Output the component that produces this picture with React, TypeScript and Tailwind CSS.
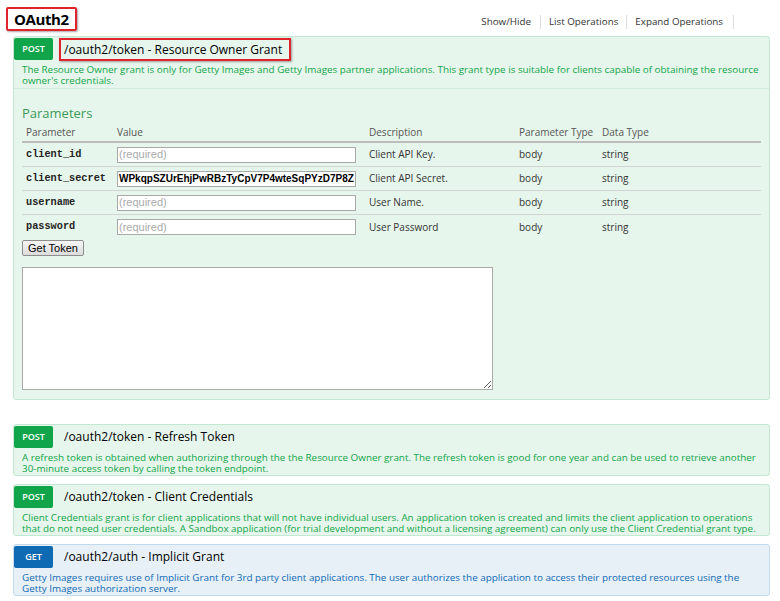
import React from "react";

interface Param {
  name: string;
  value: string;
  description: string;
}

const params: Param[] = [
  { name: "client_id", value: "", description: "Client API Key." },
  {
    name: "client_secret",
    value: "WPkqpSZUrEhjPwRBzTyCpV7P4wteSqPYzD7P8ZNxHuVe",
    description: "Client API Secret.",
  },
  { name: "username", value: "", description: "User Name." },
  { name: "password", value: "", description: "User Password" },
];

const sans = "font-['Open_Sans',sans-serif]";

const Badge = ({ method, blue }: { method: string; blue?: boolean }) => (
  <div
    className={`flex h-[22px] w-[39px] items-center justify-center rounded-[2px] text-[9px] font-semibold text-white ${
      blue ? "bg-[#0f6ab4]" : "bg-[#10a54a]"
    }`}
  >
    {method}
  </div>
);

const OperationPanel = ({
  method,
  title,
  lines,
  blue,
}: {
  method: string;
  title: string;
  lines: string[];
  blue?: boolean;
}) => (
  <div
    className={`rounded-[3px] border ${
      blue
        ? "border-[#c3d9ec] bg-[#e7f0f7]"
        : "border-[#c3e8d1] bg-[#e7f6ec]"
    }`}
  >
    <div className="flex h-[23px] items-center">
      <Badge method={method} blue={blue} />
      <span className="ml-[11px] text-[12px] text-black">{title}</span>
    </div>
    <div
      className={`px-[8px] pb-[1px] pt-[4px] text-[9.85px] leading-[11px] ${
        blue ? "text-[#0f6ab4]" : "text-[#10a54a]"
      }`}
    >
      {lines.map((l) => (
        <div key={l} className="whitespace-nowrap">
          {l}
        </div>
      ))}
    </div>
  </div>
);

export default function App() {
  return (
    <div className={`min-h-[601px] w-[780px] bg-white pl-[13px] pr-[10px] ${sans}`}>
      {/* header */}
      <div className="flex h-[36px] items-start justify-between">
        <div className="ml-[-7px] mt-[7px] flex h-[24px] items-center rounded-[2px] border-2 border-[#e0242b] px-[6px] shadow-[1px_1px_2px_rgba(0,0,0,0.35)]">
          <span className="text-[15px] font-bold tracking-[-0.4px] text-black">OAuth2</span>
        </div>
        <div className="mr-[36px] mt-[15px] flex items-center text-[9.8px] text-[#333]">
          <span className="pr-[9px]">Show/Hide</span>
          <span className="h-[14px] w-px bg-[#ddd]" />
          <span className="px-[8px]">List Operations</span>
          <span className="h-[14px] w-px bg-[#ddd]" />
          <span className="pl-[8px] pr-[10px]">Expand Operations</span>
          <span className="h-[14px] w-px bg-[#ddd]" />
        </div>
      </div>

      {/* main expanded operation */}
      <div className="w-[757px] rounded-[3px] border border-[#c3e8d1] bg-[#e7f6ec]">
        <div className="flex h-[23px] items-center">
          <Badge method="POST" />
          <div className="ml-[6px] mt-[2px] flex h-[23px] items-center border-2 border-[#e0242b] pl-[3px] pr-[7px] shadow-[1px_1px_2px_rgba(0,0,0,0.35)]">
            <span className="text-[12px] text-black">
              /oauth2/token - Resource Owner Grant
            </span>
          </div>
        </div>
        <div className="border-b border-[#d2ecdb] px-[8px] pb-[2px] pt-[4px] text-[9.85px] leading-[11px] text-[#10a54a]">
          <div className="whitespace-nowrap">
            The Resource Owner grant is only for Getty Images and Getty Images
            partner applications. This grant type is suitable for clients
            capable of obtaining the resource
          </div>
          <div className="whitespace-nowrap">owner's credentials.</div>
        </div>

        <div className="px-[8px] pb-[9px] pt-[15px]">
          <div className="text-[13px] leading-[18px] text-[#3b9a5a]">Parameters</div>
          <div className="mt-[2px] w-[739px]">
            <div className="grid h-[19px] grid-cols-[91px_252px_150px_83px_163px] items-center border-b-2 border-[#bdbdbd] text-[10px] text-[#555]">
              <div className="pl-[4px]">Parameter</div>
              <div className="pl-[4px]">Value</div>
              <div className="pl-[4px]">Description</div>
              <div className="pl-[4px]">Parameter Type</div>
              <div className="pl-[4px]">Data Type</div>
            </div>
            {params.map((p, i) => (
              <div
                key={p.name}
                className={`grid h-[24px] grid-cols-[91px_252px_150px_83px_163px] items-center text-[10px] text-[#333] ${
                  i < params.length - 1 ? "border-b border-[#d4d4d4]" : ""
                }`}
              >
                <div className="pl-[4px] font-['Courier_New','Liberation_Mono',monospace] text-[10.25px] font-bold text-[#222]">
                  {p.name}
                </div>
                <div className="pl-[4px]">
                  <input
                    readOnly
                    value={p.value}
                    placeholder="(required)"
                    className={`block h-[16px] w-[239px] border border-[#a9a9a9] bg-white px-[1px] font-['Liberation_Sans',Arial,sans-serif] text-black placeholder:text-[#aaa] ${
                      p.value ? "text-[10px] font-bold" : "text-[11px]"
                    }`}
                  />
                </div>
                <div className="pl-[4px]">{p.description}</div>
                <div className="pl-[4px]">body</div>
                <div className="pl-[4px]">string</div>
              </div>
            ))}
          </div>
          <button className="mt-[1px] block h-[16px] rounded-[2px] border border-[#8e8e8e] bg-gradient-to-b from-[#f6f6f6] to-[#dcdcdc] px-[5px] font-['Liberation_Sans',Arial,sans-serif] text-[11px] leading-[14px] text-black">
            Get Token
          </button>
          <textarea
            readOnly
            className="mt-[11px] block h-[123px] w-[471px] border border-[#a9a9a9] bg-white"
          />
        </div>
      </div>

      <div className="mt-[24px] flex w-[757px] flex-col gap-[8px]">
        <OperationPanel
          method="POST"
          title="/oauth2/token - Refresh Token"
          lines={[
            "A refresh token is obtained when authorizing through the the Resource Owner grant. The refresh token is good for one year and can be used to retrieve another",
            "30-minute access token by calling the token endpoint.",
          ]}
        />
        <OperationPanel
          method="POST"
          title="/oauth2/token - Client Credentials"
          lines={[
            "Client Credentials grant is for client applications that will not have individual users. An application token is created and limits the client application to operations",
            "that do not need user credentials. A Sandbox application (for trial development and without a licensing agreement) can only use the Client Credential grant type.",
          ]}
        />
        <OperationPanel
          method="GET"
          blue
          title="/oauth2/auth - Implicit Grant"
          lines={[
            "Getty Images requires use of Implicit Grant for 3rd party client applications. The user authorizes the application to access their protected resources using the",
            "Getty Images authorization server.",
          ]}
        />
      </div>
    </div>
  );
}
